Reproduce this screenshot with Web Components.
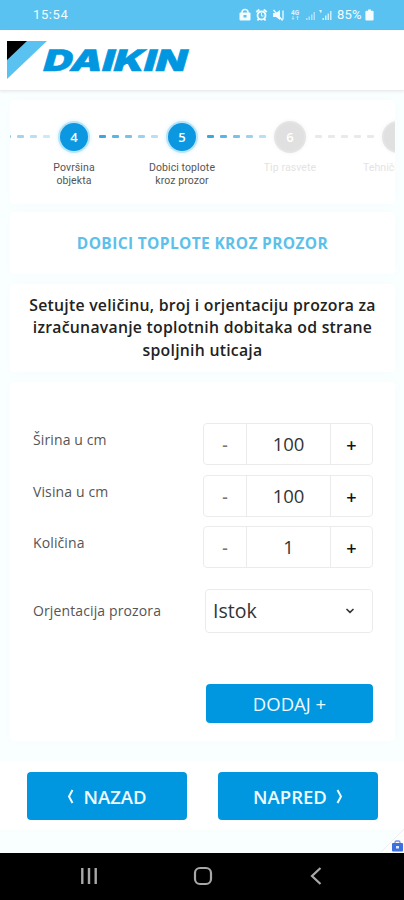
<!DOCTYPE html>
<html lang="sr">
<head>
<meta charset="utf-8">
<title>Daikin</title>
<style>
html,body{margin:0;padding:0}
body{width:404px;height:900px;overflow:hidden;font-family:"Open Sans","Noto Sans",sans-serif;background:#f9feff;color:#222}
</style>
</head>
<body>
<daikin-app></daikin-app>
<script>
function define(name, html, setup) {
  customElements.define(name, class extends HTMLElement {
    connectedCallback() {
      if (this.shadowRoot) return;
      const root = this.attachShadow({ mode: "open" });
      const t = document.createElement("template");
      t.innerHTML = html;
      root.append(t.content.cloneNode(true));
      if (setup) setup(this, root);
    }
  });
}

define("status-bar", `
<style>
:host{display:flex;height:30px;box-sizing:border-box;background:#59c2f0;color:#f4fcff;align-items:center;padding:0 30px 0 33px;font:13px/30px Roboto,sans-serif}
.time{flex:1;letter-spacing:.6px;}
svg{display:block}
.icons{margin-right:2px}
.pct{letter-spacing:.2px;font-size:13px;width:28px;white-space:nowrap}
</style>
<span class="time">15:54</span>
<svg class="icons" width="96" height="14" viewBox="0 0 96 14" fill="#f4fcff">
  <path d="M3 5V4.500a3 3 0 0 1 6 0V5" fill="none" stroke="#f4fcff" stroke-width="1.500"/><rect x=".5" y="4.500" width="11" height="8" rx="1"/><rect x="4.500" y="7" width="3" height="2.500" fill="#59c2f0"/>
  <circle cx="22.500" cy="7.500" r="4" fill="none" stroke="#f4fcff" stroke-width="1.800"/><path d="M17.300 4l3-2.500M27.700 4l-3-2.500M18.500 12.500l1.500-2M26.500 12.500l-1.500-2" stroke="#f4fcff" stroke-width="1.800"/><path d="M22.500 5v3h2" fill="none" stroke="#f4fcff"/>
  <path d="M34 5h3l4-3v10l-4-3h-3z"/><path d="M34.500 2l9 10.500M44 2.500v9" stroke="#f4fcff" stroke-width="1.300"/>
  <text x="52" y="6.500" font-size="6.500" font-family="Roboto" font-weight="700" opacity=".85">4G</text>
  <path d="M54 8v3M52.800 10l1.200 1.500 1.200-1.500M58.500 12V8.500M57.300 9.500l1.200-1.300 1.200 1.300" fill="none" stroke="#f4fcff" stroke-width=".8" opacity=".7"/>
  <path d="M67 10h1.500v2H67zM69.500 8.500H71V12h-1.500zM72 6.500h1.500V12H72zM74.500 4H76v8h-1.500z" opacity=".55"/>
  <path d="M80 2h3l-1 3.500zM83.500 10H85v2h-1.500zM86 7.500h1.500V12H86z" opacity=".8"/><path d="M88.500 5.500H90V12h-1.500zM91 3h1.500v9H91z" opacity=".75"/>
</svg>
<span class="pct">85%</span>
<svg width="9" height="14" viewBox="0 0 9 14"><path d="M3 1.500h3v1.300h1.600q1 0 1 1v7.700q0 1-1 1H1.400q-1 0-1-1V3.800q0-1 1-1H3z" fill="#f4fcff"/></svg>
`);

define("brand-header", `
<style>
:host{display:flex;align-items:flex-start;height:61px;box-sizing:border-box;padding:9px 0 0 6px;background:#fff;border-bottom:1px solid #ececec;box-shadow:0 1px 3px #0001;position:relative}
svg{display:block}
</style>
<svg width="190" height="42" viewBox="6 39 190 42">
  <path d="M7 41H47L7 79Z" fill="#59c2f0"/><path d="M7 41H27L7 60Z" fill="#000"/>
  <text transform="translate(41.500 70.500) skewX(-16)" font-family="Inter" font-weight="900" font-size="29.500" textLength="143" lengthAdjust="spacingAndGlyphs" fill="#0097e0" stroke="#0097e0" stroke-width=".6">DAIKIN</text>
</svg>
`);

define("ui-card", `
<style>:host{display:block;box-sizing:border-box;background:#fff;border-radius:4px;box-shadow:0 0 4px #f8fdff;overflow:hidden}</style><slot></slot>
`);

define("wizard-step", `
<style>
:host{display:flex;flex:none;--c:#2fa3dc}
:host([first]){--c:#6bbfe4}
:host([pending]){--c:#cfcfcf}
.line{display:flex;width:72px;box-sizing:border-box;padding:35px 0 0 7px;gap:6px}
.line i{width:7px;height:3px;border-radius:1px;background:var(--c)}
.line i:nth-child(1){opacity:.95}.line i:nth-child(2){opacity:.8}.line i:nth-child(3){opacity:.65}.line i:nth-child(4){opacity:.48}.line i:nth-child(5){opacity:.34}
:host([pending]) .line i{opacity:.45}
.col{width:36px;display:flex;flex-direction:column;align-items:center;padding-top:21px}
.dot{width:28px;height:28px;border-radius:50%;background:#0b98e0;color:#fff;font:600 13px/29px "Open Sans",sans-serif;text-align:center;box-shadow:0 0 0 2px #b9e4f8,0 0 4px 2px #d6f0fb;margin:2px 0 10px}
:host([off]) .dot{background:#e0e0e0;box-shadow:0 0 0 2px #e4e4e4,0 0 4px 2px #f2f2f2}
.label{width:100px;margin:0 -32px;text-align:center;font:10.500px/13px Roboto,sans-serif;letter-spacing:.1px;color:#555}
:host([off]) .label{color:#e3e3e3}
</style>
<div class="line"><i></i><i></i><i></i><i></i><i></i></div>
<div class="col"><div class="dot"></div><div class="label"><slot></slot></div></div>
`, (el, r) => { r.querySelector(".dot").textContent = el.getAttribute("n"); });

define("number-stepper", `
<style>
:host{display:grid;grid-template-columns:42px 85px 1fr;grid-template-rows:40px;width:170px;height:42px;box-sizing:border-box;border:1px solid #ebebeb;border-radius:4px;text-align:center;overflow:hidden}
.m{color:#777;font-size:17px;line-height:42px;font-weight:600}
.v{border:solid #ebebeb;border-width:0 1px;font-size:18.500px;color:#333;line-height:40px}
.p{color:#111;font-size:18px;line-height:43px;font-weight:600}
</style>
<span class="m">-</span><span class="v"><slot></slot></span><span class="p">+</span>
`);

define("select-box", `
<style>
:host{display:flex;width:168px;height:44px;box-sizing:border-box;border:1px solid #ebebeb;border-radius:4px;align-items:center;justify-content:space-between;padding:0 17px 0 7px;font-size:19.500px;color:#333}
</style>
<slot></slot><svg width="10" height="8" viewBox="0 0 10 8"><path d="M1.500 2L5 5.300 8.500 2" fill="none" stroke="#333" stroke-width="1.600"/></svg>
`);

define("form-row", `
<style>
:host{display:flex;justify-content:space-between;align-items:center}
.l{font-size:14px;color:#555;letter-spacing:.12px;padding-bottom:9px;white-space:nowrap}
:host([last]) .l{padding-bottom:0}
</style>
<span class="l"></span><slot></slot>
`, (el, r) => { r.querySelector(".l").textContent = el.getAttribute("label"); });

define("ui-button", `
<style>
:host{display:flex;align-items:center;justify-content:center;gap:9px;box-sizing:border-box;background:#0097e0;color:#eefaff;border-radius:4px;font-size:18.500px;white-space:nowrap}
</style><slot></slot>
`);

define("chevron-icon", `
<style>:host{display:block}:host([right]){transform:scaleX(-1)}svg{display:block}</style>
<svg width="7" height="15" viewBox="0 0 7 15"><path d="M5.500 1L2 7.500l3.500 6.500" fill="none" stroke="#eefaff" stroke-width="2"/></svg>
`);

define("corner-badge", `
<style>:host{position:absolute;right:0;bottom:0;display:block}svg{display:block}</style>
<svg width="24" height="25" viewBox="0 0 24 25"><path d="M24 1L0 25H24Z" fill="#fdfdfd"/><path d="M24 1L1 24" stroke="#eeeeee"/><path d="M15 15.500v-1q0-1.500 1.500-1.500h2q1.500 0 1.500 1.500v1" fill="none" stroke="#6c93e6" stroke-width="1.300"/><rect x="12" y="15" width="11" height="8.500" rx="1" fill="#3a6fdd"/><rect x="16" y="18" width="3" height="2.500" fill="#dfe9ff"/></svg>
`);

define("nav-bar", `
<style>
:host{display:flex;height:47px;background:#000;align-items:center;box-sizing:border-box;padding:0 0 2px 80px;gap:94.500px}
svg{display:block}
</style>
<svg width="18" height="20" viewBox="0 0 18 20"><path d="M2.300 2v16M9 2v16M15.700 2v16" stroke="#a8a8a8" stroke-width="2.400"/></svg>
<svg width="20" height="20" viewBox="0 0 20 20"><rect x="2" y="2" width="16" height="16" rx="5" fill="none" stroke="#a8a8a8" stroke-width="2.200"/></svg>
<svg width="20" height="20" viewBox="0 0 20 20"><path d="M13.500 2L5 10l8.500 8" fill="none" stroke="#a8a8a8" stroke-width="2.200"/></svg>
`);

define("daikin-app", `
<style>
:host{display:flex;flex-direction:column;width:404px;height:900px;background:#f9feff}
main{display:flex;flex-direction:column;padding:9px 9px 0 10px;height:670px;box-sizing:border-box}
.steps{height:104px}
.track{display:flex;margin-left:-26px;width:500px}
.title{height:62px;margin-top:8px;text-align:center;font-size:15.500px;font-weight:700;line-height:62px;color:#5cc0ea;letter-spacing:.36px}
.desc{height:88px;margin-top:10px;text-align:center;font-size:15.800px;font-weight:600;line-height:22.500px;color:#222;padding-top:9.500px;letter-spacing:.25px;white-space:nowrap}
.form{height:359px;margin-top:10px;padding:41px 22px 0 23px;display:flex;flex-direction:column}
form-row{margin-bottom:9.500px}
form-row[last]{margin:11px 0 51.500px}
.add{width:167px;height:39px;align-self:flex-end}
footer{display:flex;justify-content:space-between;height:69px;box-sizing:border-box;background:#fff;padding:11px 26px 0 27px}
footer ui-button{width:160px;height:48px;font-weight:600}
.gap{flex:1;position:relative}
</style>
<status-bar></status-bar>
<brand-header></brand-header>
<main>
  <ui-card class="steps"><div class="track">
    <wizard-step n="4" first>Površina<br>objekta</wizard-step>
    <wizard-step n="5">Dobici toplote<br>kroz prozor</wizard-step>
    <wizard-step n="6" off>Tip rasvete</wizard-step>
    <wizard-step n="" off pending>Tehnički uslovi</wizard-step>
  </div></ui-card>
  <ui-card class="title">DOBICI TOPLOTE KROZ PROZOR</ui-card>
  <ui-card class="desc">Setujte veličinu, broj i orjentaciju prozora za<br>izračunavanje toplotnih dobitaka od strane<br>spoljnih uticaja</ui-card>
  <ui-card class="form">
    <form-row label="Širina u cm"><number-stepper>100</number-stepper></form-row>
    <form-row label="Visina u cm"><number-stepper>100</number-stepper></form-row>
    <form-row label="Količina"><number-stepper>1</number-stepper></form-row>
    <form-row label="Orjentacija prozora" last><select-box>Istok</select-box></form-row>
    <ui-button class="add">DODAJ +</ui-button>
  </ui-card>
</main>
<footer>
  <ui-button><chevron-icon></chevron-icon>NAZAD</ui-button>
  <ui-button>NAPRED<chevron-icon right></chevron-icon></ui-button>
</footer>
<div class="gap"><corner-badge></corner-badge></div>
<nav-bar></nav-bar>
`);
</script>
</body>
</html>
